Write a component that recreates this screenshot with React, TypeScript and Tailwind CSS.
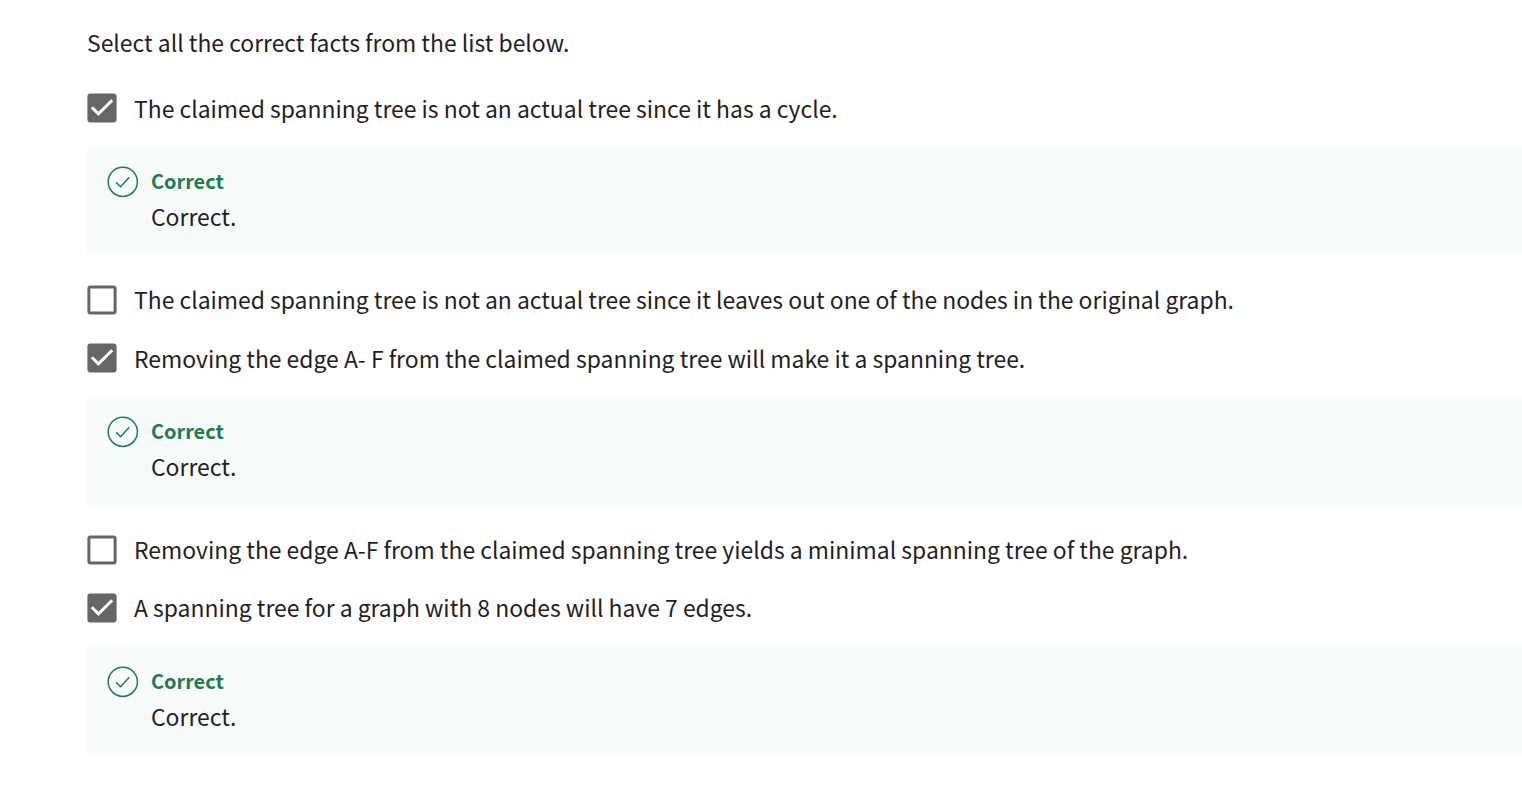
type Answer = { text: string; checked: boolean; spacing: string };

const answers: Answer[] = [
  { text: "The claimed spanning tree is not an actual tree since it has a cycle.", checked: true, spacing: "pb-0" },
  { text: "The claimed spanning tree is not an actual tree since it leaves out one of the nodes in the original graph.", checked: false, spacing: "pb-0.5" },
  { text: "Removing the edge A- F from the claimed spanning tree will make it a spanning tree.", checked: true, spacing: "pb-0" },
  { text: "Removing the edge A-F from the claimed spanning tree yields a minimal spanning tree of the graph.", checked: false, spacing: "pb-0.5" },
  { text: "A spanning tree for a graph with 8 nodes will have 7 edges.", checked: true, spacing: "pb-0.5" },
];

function Checkbox({ checked }: { checked: boolean }) {
  return (
    <svg className="size-[30px] shrink-0" viewBox="0 0 30 30" fill="none">
      {checked ? (
        <>
          <rect x="0.4" y="0.4" width="29.2" height="29.2" rx="3" fill="#666" />
          <path d="M4.8 14.2l6.6 6.7L25.2 7.2" stroke="#fff" strokeWidth="3" />
        </>
      ) : (
        <rect x="1.9" y="1.9" width="26.2" height="26.2" rx="1.5" stroke="#666" strokeWidth="3" />
      )}
    </svg>
  );
}

function Feedback() {
  return (
    <div className="mt-2.5 mb-4 flex h-[108px] gap-3 bg-[#f7fbf9] pt-[18px] pl-5">
      <svg className="mt-px size-8 shrink-0" viewBox="0 0 32 32" fill="none" stroke="#1d7c50" strokeWidth="1.5">
        <circle cx="15.8" cy="15.8" r="14.6" />
        <path d="M9.2 16.4l4.4 4.3 8.7-9.4" />
      </svg>
      <div>
        <p className="text-[19.9px] leading-8 font-bold text-[#1d7c50]">Correct</p>
        <p className="mt-[3px] leading-8">Correct.</p>
      </div>
    </div>
  );
}

export default function App() {
  return (
    <main className="h-[794px] overflow-hidden bg-white pt-6 pl-[87px] font-['Noto_Sans_CJK_SC',sans-serif] text-[22.92px] text-[#1f1f1f]">
      <p className="mb-[19px] leading-9">Select all the correct facts from the list below.</p>
      {answers.map((a) => (
        <div key={a.text}>
          <label className="flex h-[58px] items-center gap-[17px] whitespace-nowrap">
            <Checkbox checked={a.checked} />
            <span className={a.spacing}>{a.text}</span>
          </label>
          {a.checked && <Feedback />}
        </div>
      ))}
    </main>
  );
}
